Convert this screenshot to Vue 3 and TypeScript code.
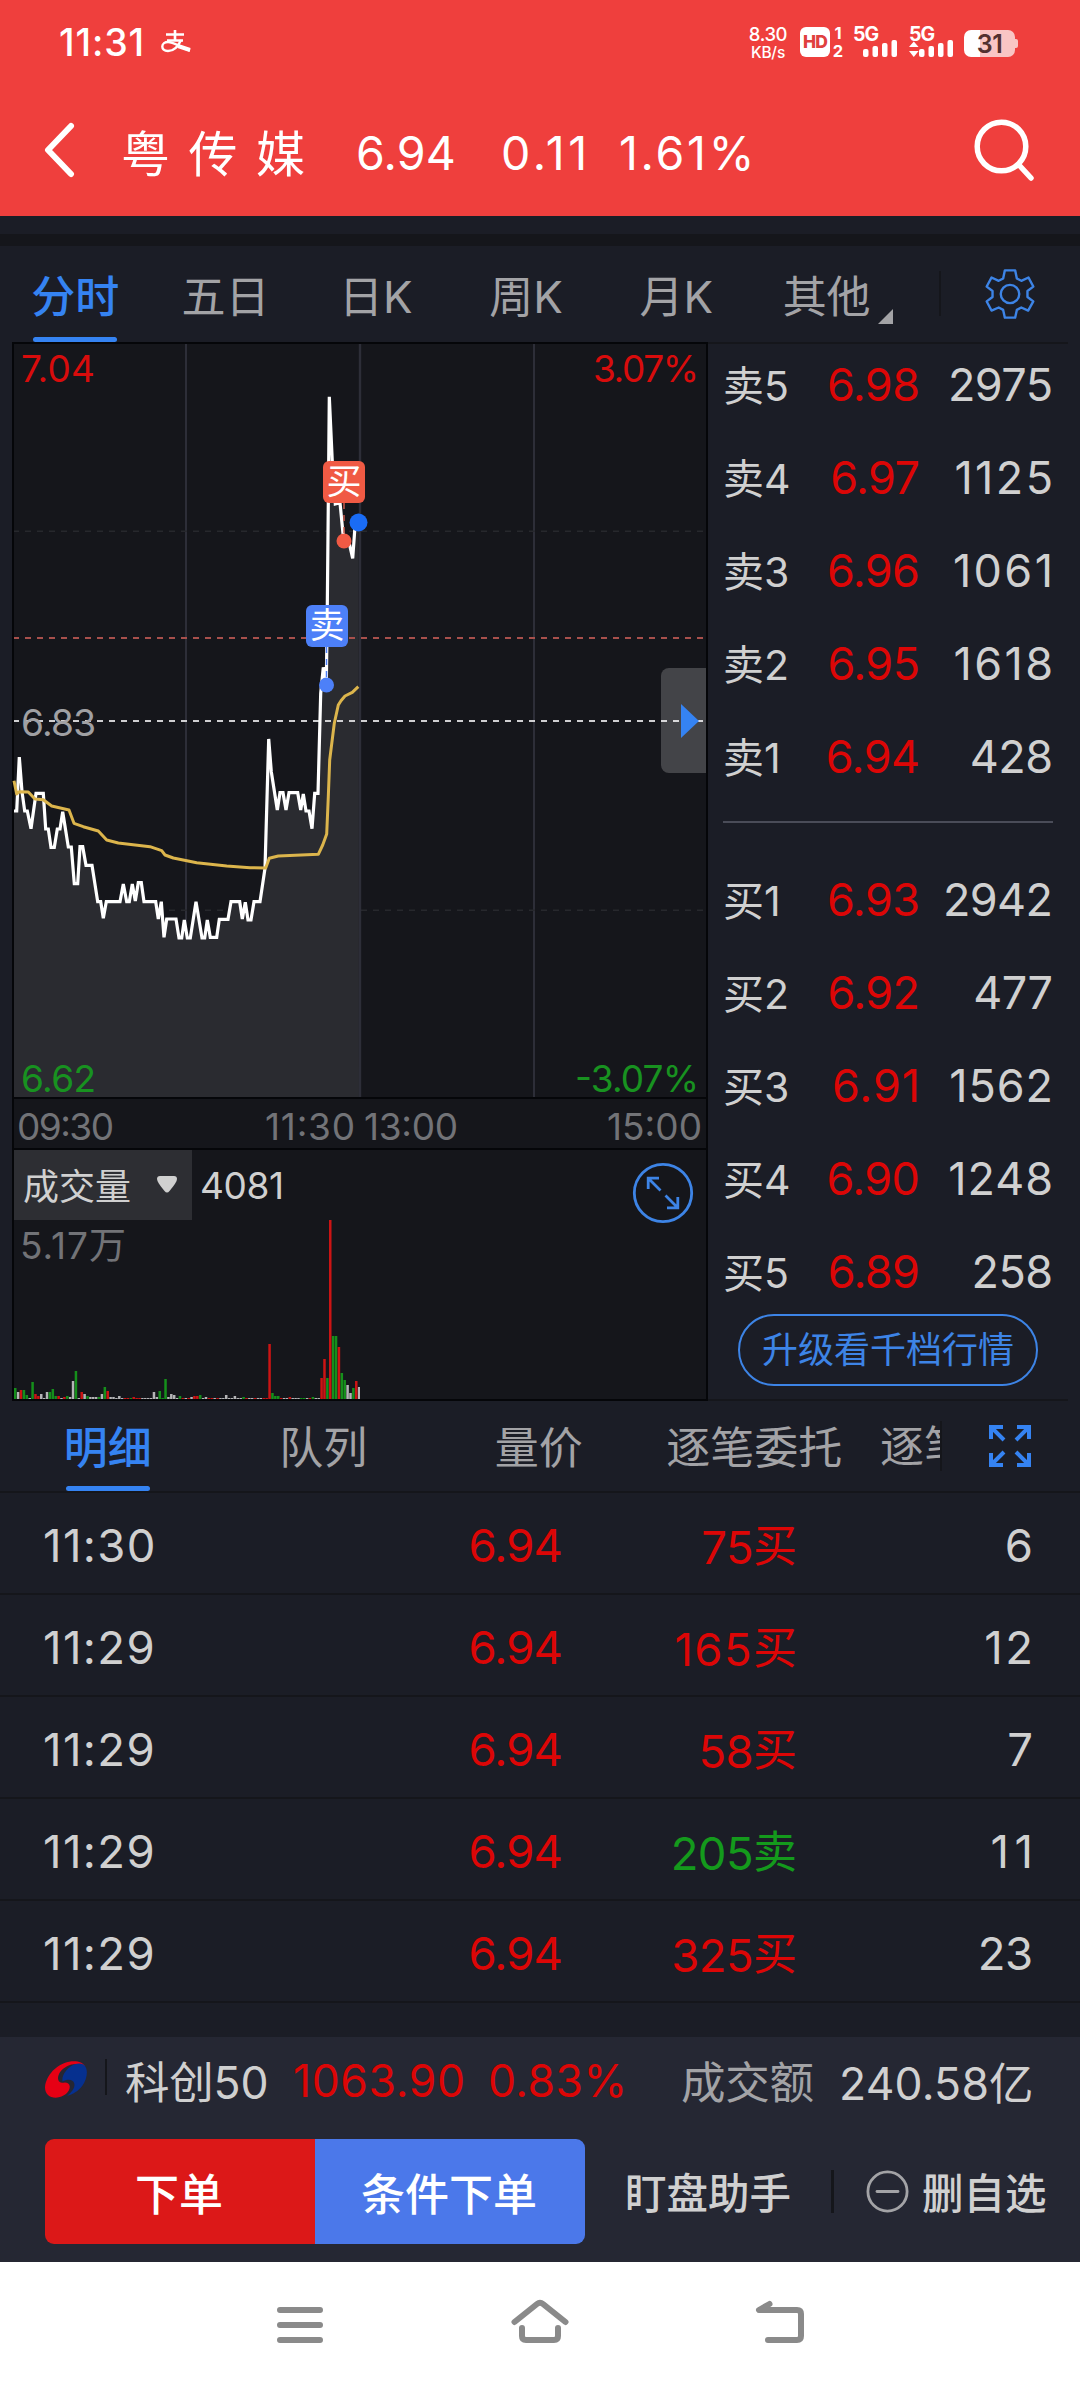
<script setup lang="ts">
interface Level { side: string; price: string; volume: string }
interface Tick { time: string; price: string; amount: string; side: '买' | '卖'; count: string }
type Point = [number, number]

const periods = ['分时', '五日', '日K', '周K', '月K', '其他']

const asks: Level[] = [
  { side: '卖5', price: '6.98', volume: '2975' },
  { side: '卖4', price: '6.97', volume: '1125' },
  { side: '卖3', price: '6.96', volume: '1061' },
  { side: '卖2', price: '6.95', volume: '1618' },
  { side: '卖1', price: '6.94', volume: '428' },
]
const bids: Level[] = [
  { side: '买1', price: '6.93', volume: '2942' },
  { side: '买2', price: '6.92', volume: '477' },
  { side: '买3', price: '6.91', volume: '1562' },
  { side: '买4', price: '6.90', volume: '1248' },
  { side: '买5', price: '6.89', volume: '258' },
]
const ticks: Tick[] = [
  { time: '11:30', price: '6.94', amount: '75', side: '买', count: '6' },
  { time: '11:29', price: '6.94', amount: '165', side: '买', count: '12' },
  { time: '11:29', price: '6.94', amount: '58', side: '买', count: '7' },
  { time: '11:29', price: '6.94', amount: '205', side: '卖', count: '11' },
  { time: '11:29', price: '6.94', amount: '325', side: '买', count: '23' },
]

// The digit 1 is narrow, so figures that hold it get wider tracking
const track = (text: string) => {
  const ones = text.split('1').length - 1
  const spacing = -0.6 + (6 * ones) / text.length
  return { letterSpacing: `${spacing.toFixed(2)}px`, marginRight: `${(-spacing).toFixed(2)}px` }
}

// Intraday series, in thirds of a pixel, measured from the plot's top-left corner
const priceLine: Point[] = [
  [0, 1401], [8, 1401], [16, 1239], [24, 1343], [32, 1401], [40, 1401], [51, 1454], [66, 1348], [88, 1348], [95, 1455],
  [103, 1455], [111, 1510], [121, 1510], [130, 1455], [138, 1455], [146, 1403], [163, 1509], [172, 1509], [181, 1619],
  [191, 1619], [198, 1508], [206, 1508], [216, 1564], [234, 1564], [251, 1673], [260, 1673], [268, 1723], [277, 1673],
  [318, 1673], [328, 1620], [338, 1673], [346, 1673], [355, 1620], [364, 1671], [373, 1616], [382, 1616], [390, 1673],
  [425, 1673], [433, 1725], [442, 1673], [450, 1780], [458, 1725], [486, 1725], [495, 1782], [503, 1782], [511, 1728],
  [520, 1782], [529, 1782], [546, 1673], [564, 1782], [572, 1782], [580, 1728], [589, 1780], [608, 1780], [616, 1726],
  [642, 1726], [651, 1673], [677, 1673], [685, 1725], [694, 1675], [702, 1728], [711, 1728], [720, 1673], [738, 1673],
  [753, 1573], [764, 1185], [772, 1283], [790, 1398], [798, 1346], [807, 1346], [816, 1398], [825, 1346], [851, 1346],
  [860, 1398], [868, 1350], [876, 1401], [885, 1401], [894, 1454], [902, 1348], [912, 1348], [920, 1048], [928, 970],
  [937, 1023], [940, 783], [943, 478], [946, 158], [955, 353], [964, 480], [978, 476], [989, 590], [1006, 598],
  [1016, 643], [1024, 535], [1034, 535],
]
const averageLine: Point[] = [
  [0, 1310], [8, 1350], [16, 1343], [43, 1344], [63, 1365], [88, 1367], [113, 1386], [165, 1398], [180, 1438], [208, 1448],
  [253, 1461], [278, 1488], [313, 1497], [408, 1508], [443, 1520], [453, 1533], [478, 1542], [548, 1556], [638, 1566],
  [708, 1571], [755, 1572], [766, 1543], [793, 1536], [913, 1531], [926, 1503], [938, 1470], [943, 1358], [947, 1248],
  [961, 1138], [973, 1083], [981, 1070], [993, 1056], [1015, 1045], [1033, 1028],
]
const toPoints = (line: Point[]) => line.map(([x, y]) => `${(x / 3).toFixed(1)},${(y / 3).toFixed(1)}`).join(' ')
const pricePoints = toPoints(priceLine)
const averagePoints = toPoints(averageLine)
const areaPoints = `0,753 ${pricePoints} 345,753`

// Minute volume bars: direction followed by height
const volumeText =
  'g11 w7 r9 g9 g4 w1 g17 r5 r3 w5 w1 w7 g7 g10 g3 r3 w1 r2 g3 w2 w18 g28 w1 r7 w5 g3 w2 w2 w2 g2 w5 g12 r8 w2 w2 w1 w3 w1 r1 r1 g1 r2 r1 r1 w1 w1 w1 w1 w7 w2 g8 g1 g20 w2 w5 w4 w1 g3 r1 w1 r1 w2 r3 r3 g4 w1 w2 r1 r1 w1 r1 w1 w1 w4 w1 w1 w3 w1 w1 g2 r1 w1 w1 r1 w1 w1 r1 r1 r55 g6 g3 g3 r1 w1 w1 r2 w1 w1 w1 g1 g1 w1 r1 g2 w1 w1 r21 r40 g21 r179 g63 g63 r52 g26 g19 w14 w6 g11 r18 w12'
const colors: Record<string, string> = { r: '#cc1414', g: '#158f1b', w: '#b4b4b6' }
const volumeBars = volumeText.split(' ').map((item, i) => ({
  x: i * 2.89,
  height: Number(item.slice(1)),
  color: colors[item[0]],
}))
</script>

<template>
  <div class="screen">
    <header class="top">
      <div class="status">
        <span class="clock">11:31</span>
        <svg class="pay" width="30" height="24" viewBox="0 0 30 24" fill="none" stroke="#fff">
          <path d="M5 4.5H23M6 10.5H22M14 0V10" stroke-width="2.6" />
          <path d="M20 10C17 17 12 21 7 21C3 21 1.3 19 1.3 16.5C1.3 13.5 4 12 7 12C13 12 18 17 29 20.5" stroke-width="2.4" />
          <path d="M17 16L29 20" stroke-width="4" />
        </svg>
        <div class="rate"><span>8.30</span><span class="unit">KB/s</span></div>
        <div class="hd">HD</div>
        <div class="sims"><span>1</span><span>2</span></div>
        <div class="signal">
          <span>5G</span>
          <svg width="46" height="18" viewBox="0 0 46 18" fill="#fff">
            <rect x="10" y="9" width="5.5" height="8" rx="2" /><rect x="19.5" y="6" width="5.5" height="11" rx="2" />
            <rect x="29" y="3" width="5.5" height="14" rx="2" /><rect x="38.5" y="0" width="5.5" height="17" rx="2" />
          </svg>
        </div>
        <div class="signal second">
          <span>5G</span>
          <svg width="46" height="18" viewBox="0 0 46 18" fill="#fff">
            <path d="M0 7L4.8 1.5L9.6 7ZM0 11L4.8 17L9.6 11Z" />
            <rect x="10" y="9" width="5.5" height="8" rx="2" /><rect x="19.5" y="6" width="5.5" height="11" rx="2" />
            <rect x="29" y="3" width="5.5" height="14" rx="2" /><rect x="38.5" y="0" width="5.5" height="17" rx="2" />
          </svg>
        </div>
        <div class="battery">31</div>
      </div>
      <div class="titlebar">
        <svg class="back" width="34" height="58" viewBox="0 0 34 58" fill="none" stroke="#fff" stroke-width="6" stroke-linecap="round" stroke-linejoin="round"><path d="M27 6L4 30L27 54" /></svg>
        <span class="name">粤传媒</span>
        <span class="last">6.94</span>
        <span class="change">0.11</span>
        <span class="percent">1.61%</span>
        <svg class="search" width="62" height="64" viewBox="0 0 62 64" fill="none" stroke="#fff" stroke-width="5.5" stroke-linecap="round"><circle cx="28.5" cy="28.5" r="24.3" /><path d="M46 47L58 60" /></svg>
      </div>
    </header>

    <div class="strip"></div>

    <nav class="periods">
      <div v-for="(p, i) in periods" :key="p" class="period" :class="{ active: i === 0 }">
        {{ p }}
        <svg v-if="i === 5" class="corner" width="15" height="15"><path d="M15 0V15H0Z" fill="#a3a3a6" /></svg>
      </div>
      <div class="tool">
        <svg width="50" height="50" viewBox="1295 808 146 148" preserveAspectRatio="none" fill="none" stroke="#3d84e6" stroke-width="7" stroke-linejoin="round">
          <path d="M1353 812H1383L1388 836L1401 843L1422 833L1436 860L1419 873V891L1436 904L1421 931L1401 922L1388 929L1383 952H1353L1348 929L1335 922L1314 931L1300 904L1317 891V873L1300 860L1314 833L1335 843L1348 836Z" />
          <circle cx="1368" cy="882" r="27" />
        </svg>
      </div>
    </nav>

    <main class="market">
      <section class="charts">
        <div class="plot">
          <svg class="canvas" width="692" height="753" viewBox="0 0 692 753">
            <g stroke="#2d2e38" stroke-width="2"><path d="M172 0V753M520 0V753" /></g>
            <g stroke="#27282d" stroke-width="1.4" stroke-dasharray="6 6" stroke-dashoffset="1"><path d="M0 187.3H692M0 566.3H692" /></g>
            <polygon :points="areaPoints" fill="#2a2b30" />
            <path d="M346 0V753" stroke="#2d2e38" stroke-width="2.4" />
            <path d="M0 294H692" stroke="#a8504c" stroke-width="2" stroke-dasharray="6 6" stroke-dashoffset="1" />
            <path d="M0 377H692" stroke="#cfcfd1" stroke-width="2" stroke-dasharray="6 6" stroke-dashoffset="1" />
            <polyline :points="pricePoints" fill="none" stroke="#fff" stroke-width="3.2" />
            <polyline :points="averagePoints" fill="none" stroke="#dcb54c" stroke-width="3" stroke-linejoin="round" />
            <g class="labels">
              <text x="7" y="38" textLength="74" fill="#d80c0c">7.04</text>
              <text x="579" y="38" textLength="106" fill="#d80c0c">3.07%</text>
              <text x="7" y="392" textLength="75" fill="#a0a0a3">6.83</text>
              <text x="7" y="748" textLength="75" fill="#189220">6.62</text>
              <text x="561" y="748" textLength="124" fill="#189220">-3.07%</text>
            </g>
            <path d="M312.5 303V336" stroke="#4d80f8" stroke-width="1.5" stroke-dasharray="6 6" />
            <path d="M330 159V190" stroke="#c75a4c" stroke-width="1.5" stroke-dasharray="6 6" />
            <circle cx="312.5" cy="341" r="7.5" fill="#4d80f8" />
            <circle cx="330" cy="197" r="7.5" fill="#f05a44" />
            <circle cx="344.5" cy="178.5" r="9" fill="#1a6cf5" />
          </svg>
          <span class="flag buy">买</span>
          <span class="flag sell">卖</span>
          <button class="handle"><svg width="18" height="34"><path d="M0 0L18 17L0 34Z" fill="#3583f2" /></svg></button>
        </div>
        <div class="axis">
          <svg width="692" height="49" viewBox="0 0 692 49" class="labels" fill="#727377">
            <text x="3" y="41" textLength="97">09:30</text>
            <text x="251" y="41" textLength="90">11:30</text>
            <text x="350" y="41" textLength="94">13:00</text>
            <text x="593" y="41" textLength="95">15:00</text>
          </svg>
        </div>
        <div class="volume">
          <div class="volume-head">
            <div class="indicator">成交量<svg width="20" height="17" viewBox="0 0 20 17"><path d="M3 0H17Q20 0 20 3Q20 6 12.5 15Q10 18 7.5 15Q0 6 0 3Q0 0 3 0Z" fill="#d0d0d0" /></svg></div>
            <span class="amount">4081</span>
            <svg class="zoom" width="62" height="62" viewBox="0 0 62 62" fill="none" stroke="#3d84e6" stroke-width="2.8"><circle cx="31" cy="31" r="28.7" /><path d="M28.5 28.5L16 16M27 16.2H16.2V27M33.5 33.5L46 46M35 45.8H45.8V35" /></svg>
          </div>
          <div class="volume-max">5.17万</div>
          <svg class="bars" width="346" height="180" viewBox="0 0 346 180">
            <rect v-for="(b, i) in volumeBars" :key="i" :x="b.x" :y="180 - b.height" width="2.5" :height="b.height" :fill="b.color" />
          </svg>
        </div>
      </section>

      <section class="book">
        <div v-for="l in asks" :key="l.side" class="level"><span class="side">{{ l.side }}</span><span class="price"><b :style="track(l.price)">{{ l.price }}</b></span><span class="qty"><b :style="track(l.volume)">{{ l.volume }}</b></span></div>
        <div class="gap"></div>
        <div v-for="l in bids" :key="l.side" class="level"><span class="side">{{ l.side }}</span><span class="price"><b :style="track(l.price)">{{ l.price }}</b></span><span class="qty"><b :style="track(l.volume)">{{ l.volume }}</b></span></div>
        <button class="upgrade">升级看千档行情</button>
      </section>
    </main>

    <nav class="details">
      <div class="detail active">明细</div>
      <div class="detail">队列</div>
      <div class="detail">量价</div>
      <div class="detail">逐笔委托</div>
      <div class="clipped"><span>逐笔</span></div>
      <svg class="full" width="42" height="42" viewBox="0 0 42 42" fill="none" stroke="#3583f2" stroke-width="4">
        <path d="M2 14V2H14M2 2L15 15M28 2H40V14M40 2L27 15M2 28V40H14M2 40L15 27M40 28V40H28M40 40L27 27" />
      </svg>
    </nav>

    <section class="ticks">
      <div v-for="(t, i) in ticks" :key="i" class="tick">
        <span class="time">{{ t.time }}</span>
        <span class="tprice">{{ t.price }}</span>
        <span class="tamount" :class="{ green: t.side === '卖' }"><b :style="{ letterSpacing: track(t.amount).letterSpacing }">{{ t.amount }}</b><i>{{ t.side }}</i></span>
        <span class="count"><b :style="track(t.count)">{{ t.count }}</b></span>
      </div>
    </section>

    <footer class="dock">
      <div class="index">
        <svg class="logo" width="42" height="37" viewBox="131 242 122 110" preserveAspectRatio="none">
          <path d="M248 259C240 244 222 240 201 244C165 251 134 284 131 320C131 340 144 351 162 351C187 350 203 334 203 318C202 305 190 304 180 307C166 304 166 289 175 275C190 255 222 242 248 259Z" fill="#e60014" />
          <path d="M248 258C257 272 252 298 240 315C228 332 211 342 195 346C210 334 219 320 216 309C213 295 195 295 182 303C178 286 195 261 217 252C231 247 243 250 248 258Z" fill="#06308f" />
        </svg>
        <span class="idx-name">科创50</span>
        <span class="idx-value">1063.90</span>
        <span class="idx-change">0.83%</span>
        <span class="turnover">成交额</span>
        <span class="turnover-value">240.58亿</span>
      </div>
      <div class="actions">
        <button class="order">下单</button>
        <button class="conditional">条件下单</button>
        <span class="assistant">盯盘助手</span>
        <span class="bar"></span>
        <svg class="minus" width="43" height="43" viewBox="0 0 43 43" fill="none" stroke="#a3a3a6" stroke-width="2.8" stroke-linecap="round"><circle cx="21.5" cy="21.5" r="19.6" /><path d="M11 21.5H32" /></svg>
        <span class="remove">删自选</span>
      </div>
    </footer>

    <div class="system">
      <svg width="1080" height="126" viewBox="0 0 1080 126" fill="none" stroke="#8a8a8a" stroke-width="6" stroke-linecap="round" stroke-linejoin="round">
        <path d="M280 48H320M280 63H320M280 78H320" />
        <path d="M514.5 60L537 42Q540 39.5 543 42L565.5 60M522 66V74Q522 78 526 78H554Q558 78 558 74V66" />
        <path d="M769.5 42L759 48H797Q801 48 801 52V74Q801 78 797 78H768" />
      </svg>
    </div>
  </div>
</template>

<style>
body { background: #1b1d26; }
</style>

<style scoped>
.screen { width: 1080px; height: 2388px; overflow: hidden; display: flex; flex-direction: column; background: #1b1d26; color: #d0d0d0; font-family: Inter, "Noto Sans CJK SC", sans-serif; white-space: nowrap; }
.screen * { box-sizing: border-box; }
button { border: 0; padding: 0; font: inherit; color: inherit; }
b { font-weight: inherit; }
svg { display: block; flex: none; }

.top { height: 216px; flex: none; background: #ef3f3d; color: #fff; }
.status { height: 84px; display: flex; align-items: center; padding-left: 59px; }
.clock { width: 102px; font-size: 37.5px; letter-spacing: 0.9px; font-weight: 500; }
.pay { width: 30px; margin-right: 558px; }
.rate { width: 38px; height: 36px; margin-right: 13px; display: flex; flex-direction: column; align-items: center; justify-content: space-between; font-size: 18.5px; line-height: 20px; letter-spacing: -0.4px; font-weight: 500; }
.rate .unit { font-size: 15.5px; line-height: 15px; letter-spacing: -0.2px; }
.hd { width: 30px; height: 30px; border-radius: 6px; background: #fff; color: #e0403e; font-size: 17.5px; font-weight: 800; line-height: 30px; text-align: center; letter-spacing: -0.8px; }
.sims { width: 14px; height: 34px; margin-right: 9px; padding-left: 2px; display: flex; flex-direction: column; justify-content: space-between; font-size: 16.5px; line-height: 16px; font-weight: 700; text-align: center; }
.signal { width: 46px; margin-right: 10px; height: 32px; display: flex; flex-direction: column; font-size: 19.5px; line-height: 16px; font-weight: 700; letter-spacing: -1px; }
.signal svg { margin-top: -2px; }
.signal.second { margin-right: 9px; }
.battery { position: relative; width: 51px; height: 27px; margin-top: 3px; border-radius: 7px; background: linear-gradient(90deg, #fff 31%, #f9c5c4 31%); color: #53302f; font-size: 25px; font-weight: 600; line-height: 28px; text-align: center; letter-spacing: -0.4px; }
.battery::after { content: ""; position: absolute; left: 51px; top: 9px; width: 3px; height: 9px; border-radius: 0 2px 2px 0; background: #f9c5c4; }

.titlebar { height: 132px; display: flex; align-items: center; padding: 0 45px 0 44px; font-size: 46.5px; }
.back { margin-top: -2px; }
.name { width: 235px; margin-left: 43px; font-size: 49px; letter-spacing: 18.5px; }
.last, .change, .percent { padding-top: 6px; }
.last { width: 145px; letter-spacing: 0.2px; }
.change { width: 118px; letter-spacing: 3.6px; }
.percent { letter-spacing: 2.7px; }
.search { margin-left: auto; }

.strip { height: 30px; flex: none; border-top: 18px solid #1b1d26; background: #15161b; }

.periods { height: 96px; flex: none; display: flex; color: #a3a3a6; font-size: 44px; }
.period { position: relative; width: 150.3px; display: flex; align-items: center; justify-content: center; }
.period.active, .detail.active { color: #3583f2; font-weight: 500; }
.period.active::after, .detail.active::after { content: ""; position: absolute; left: calc(50% - 42px); bottom: 0; width: 84px; height: 5px; border-radius: 2.5px; background: #3583f2; }
.corner { position: absolute; left: 127px; bottom: 18px; }
.tool { margin-left: 37px; width: 140px; height: 45px; margin-top: 25px; border-left: 2px solid #15161b; display: flex; align-items: center; padding-left: 44px; }

.market { height: 1059px; flex: none; display: flex; padding-left: 12px; }
.charts { width: 696px; border: 2px solid #050609; background: #15161b; display: flex; flex-direction: column; }
.labels { font-size: 37px; font-weight: 400; }
.plot { position: relative; height: 755px; border-bottom: 2px solid #050609; }
.canvas { overflow: visible; }
.flag { position: absolute; width: 42px; height: 42px; border-radius: 6px; color: #fff; font-size: 35px; line-height: 41px; text-align: center; }
.flag.buy { left: 309px; top: 117px; background: #f05a44; }
.flag.sell { left: 292px; top: 261px; background: #4d80f8; }
.handle { position: absolute; right: 0; top: 324px; width: 45px; height: 105px; border-radius: 8px 0 0 8px; background: rgba(255, 255, 255, 0.2); padding-left: 20px; }
.axis { height: 51px; border-bottom: 2px solid #050609; }
.volume { position: relative; flex: 1; }
.volume-head { height: 70px; display: flex; align-items: center; }
.indicator { width: 178px; height: 70px; background: #2d2e33; display: flex; align-items: center; gap: 26px; padding: 0 0 2px 9px; font-size: 36px; }
.amount { margin-left: 8px; font-size: 37px; letter-spacing: -0.4px; padding-top: 1px; }
.zoom { margin-left: auto; margin-right: 12px; margin-top: 16px; }
.volume-max { height: 52px; padding-left: 6px; line-height: 52px; font-size: 37px; letter-spacing: 1px; color: #727377; }
.bars { position: absolute; left: 0; bottom: 0; }

.book { width: 360px; border-top: 2px solid #15161b; border-bottom: 2px solid #15161b; display: flex; flex-direction: column; }
.level { height: 93px; margin: 0 15px 0 15px; display: flex; align-items: center; flex: none; position: relative; top: -6px; }
.side { width: 90px; font-size: 41px; padding-bottom: 4px; }
.price { width: 107px; text-align: right; font-size: 45px; color: #dc0606; }
.qty { flex: 1; text-align: right; font-size: 45px; }
.gap { height: 50px; flex: none; margin: 0 15px; padding-top: 12px; }
.gap::before { content: ""; display: block; height: 2px; background: #4a4c58; }
.upgrade { width: 300px; height: 72px; margin: -10px 0 0 30px; flex: none; border: 2px solid #3d84e6; border-radius: 36px; background: none; color: #3d84e6; font-size: 36px; line-height: 68px; }

.details { height: 92px; flex: none; display: flex; align-items: center; border-bottom: 2px solid #15161b; color: #a3a3a6; font-size: 44px; }
.detail { position: relative; width: 215.5px; height: 90px; line-height: 94px; text-align: center; }
.clipped { width: 80px; height: 50px; border-right: 2px solid #15161b; overflow: hidden; line-height: 52px; padding-left: 18px; }
.full { margin-left: 47px; }

.ticks { height: 544px; flex: none; }
.tick { height: 102px; border-bottom: 2px solid #15161b; display: flex; align-items: center; font-size: 45.5px; letter-spacing: -0.9px; padding: 4px 47px 0 43px; }
.time { width: 319px; letter-spacing: 1.4px; }
.tprice { width: 200px; text-align: right; color: #dc0606; }
.tamount { width: 235px; text-align: right; color: #dc0606; }
.tamount i { font-style: normal; font-size: 44px; letter-spacing: 0; position: relative; top: -2px; }
.tamount.green { color: #149a1c; }
.count { flex: 1; text-align: right; }

.dock { height: 225px; flex: none; background: #252733; }
.index { height: 102px; display: flex; align-items: center; padding: 0 0 14px 45px; font-size: 44.5px; letter-spacing: -0.2px; }
.logo { margin-top: -4px; }
.idx-name { margin: -3px 0 0 18px; width: 188px; position: relative; padding-left: 20px; }
.idx-name::before { content: ""; position: absolute; left: 0; top: 12px; width: 2px; height: 36px; background: #15161b; }
.idx-value { width: 195px; letter-spacing: 0.6px; color: #dc0606; }
.idx-change { width: 193px; letter-spacing: 0.4px; color: #dc0606; }
.turnover { width: 158px; color: #a3a3a6; margin-top: -3px; }
.turnover-value { margin-top: -2px; letter-spacing: 0.2px; }
.actions { height: 105px; display: flex; align-items: center; padding-left: 45px; }
.order, .conditional { width: 270px; height: 105px; font-size: 44px; font-weight: 500; color: #fff; flex: none; padding-right: 2px; }
.order { background: #dc1818; border-radius: 9px 0 0 9px; }
.conditional { background: #4b78ea; border-radius: 0 9px 9px 0; }
.assistant { width: 246px; padding: 0 0 2px 40px; font-size: 41.5px; font-weight: 500; }
.bar { width: 3px; height: 43px; background: #15161b; }
.minus { margin-left: 32px; }
.remove { margin-left: 13px; padding-bottom: 2px; font-size: 41.5px; font-weight: 500; }

.system { height: 126px; flex: none; background: #fff; }
</style>
